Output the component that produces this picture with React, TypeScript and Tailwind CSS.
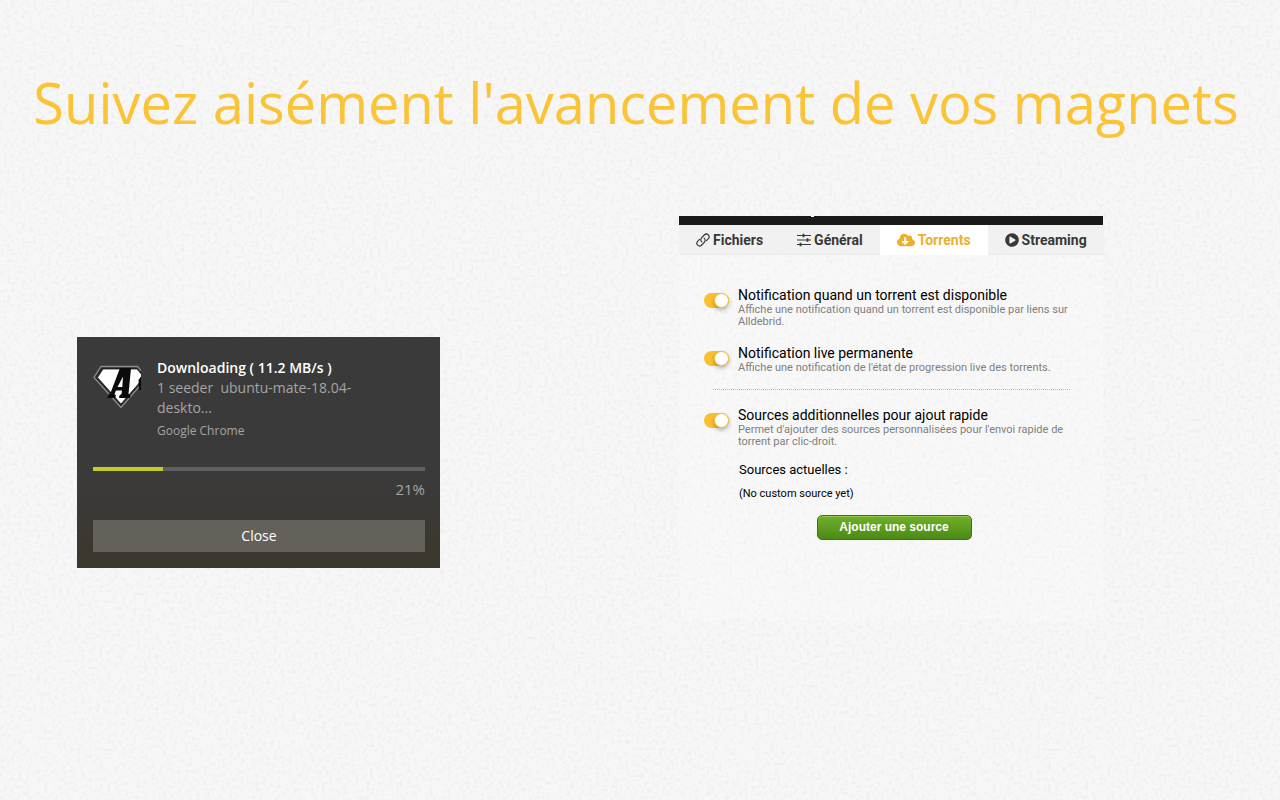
import type { ReactNode } from "react";
import { FaCloudDownloadAlt, FaPlayCircle } from "react-icons/fa";

function PaperTexture() {
  return (
    <svg aria-hidden="true" className="pointer-events-none absolute inset-0 h-full w-full">
      <filter id="paper" x="0" y="0" width="100%" height="100%" colorInterpolationFilters="sRGB">
        <feTurbulence type="fractalNoise" baseFrequency="0.27" numOctaves="2" seed="4" />
        <feColorMatrix values="0 0 0 0 0.6  0 0 0 0 0.6  0 0 0 0 0.6  0.26 0 0 0 -0.12" />
      </filter>
      <rect width="100%" height="100%" filter="url(#paper)" />
    </svg>
  );
}

function Logo() {
  return (
    <svg viewBox="0 0 48 50" className="mt-[3px] h-[50px] w-12 shrink-0" role="img" aria-label="AllDebrid">
      <path d="M8 6.500H44.500L54 17.500L28 47.500L1 17.500Z" fill="#2a2a2a" stroke="#8e8e8e" strokeWidth="1.300" />
      <path d="M10 9H44L51 17.500L28 44L4.500 17.500Z" fill="#fff" stroke="#181818" strokeWidth="0.800" />
      <path d="M27 8H38L35.500 34L37.500 35.500L37 38H26L26.500 35.500L28.500 34L29 30.500H23L21.500 34L23 35.500L22 38H14.500L15 35L17.500 33Z" fill="#0b0b0b" />
      <path d="M30 16.500L24.500 27H29.300Z" fill="#fff" />
      <path d="M45.500 20L48 16.500V30H46Z" fill="#0b0b0b" />
    </svg>
  );
}

function LinkIcon() {
  return (
    <svg viewBox="0 0 14 14" className="size-3.5" fill="none" stroke="currentColor" strokeWidth="1.200" strokeLinecap="round" aria-hidden="true">
      <path d="M5.900 8.900C4.500 7.700 4.500 5.800 5.700 4.600L8.300 2C9.500 0.800 11.300 0.900 12.300 1.900C13.400 3 13.400 4.700 12.200 5.900L10.500 7.600" />
      <path d="M8.100 5.100C9.500 6.300 9.500 8.200 8.300 9.400L5.700 12C4.500 13.200 2.700 13.100 1.700 12.100C0.600 11 0.600 9.300 1.800 8.100L3.500 6.400" />
    </svg>
  );
}

function SlidersIcon() {
  return (
    <svg viewBox="0 0 14 14" className="size-3.5" fill="none" stroke="currentColor" strokeWidth="1.200" aria-hidden="true">
      <path d="M0 2.500H14M0 7H14M0 11.500H14" />
      <path d="M6.500 0.800V4.200M10.500 5.300V8.700M3.500 9.800V13.200" strokeWidth="1.800" />
    </svg>
  );
}

function Tab({ icon, label, active }: { icon: ReactNode; label: string; active?: boolean }) {
  return (
    <button
      type="button"
      role="tab"
      aria-selected={!!active}
      className={
        active
          ? "flex h-[30px] items-center justify-center gap-[3px] bg-white px-[17px] text-[#ebb02d]"
          : "flex h-[30px] items-center justify-center gap-[3px] border-b border-[#e9e9e9] bg-[#f1f1f1] px-[17px] text-[#383838] last:flex-1"
      }
    >
      {icon}
      <span>{label}</span>
    </button>
  );
}

function Setting({ id, title, text }: { id: string; title: string; text: string }) {
  return (
    <div className="flex items-start gap-2">
      <input
        id={id}
        type="checkbox"
        defaultChecked
        className="mt-[6px] flex h-[15px] w-[25px] shrink-0 appearance-none items-center justify-end rounded-full bg-[#ccc] before:size-[15px] before:rounded-full before:border before:border-[#f9c132] before:bg-white before:shadow-[0_2px_4px_rgba(0,0,0,0.3)] checked:bg-[#f9c132]"
      />
      <label htmlFor={id} className="block pl-px text-[11px] leading-3 text-[#808080]">
        <span className="mb-px block text-sm leading-4 text-black">{title}</span>
        {text}
      </label>
    </div>
  );
}

export default function App() {
  return (
    <main className="relative min-h-screen bg-[#f7f7f7]">
      <PaperTexture />
      <div className="relative">
        <h1 className="pt-[66px] pr-2 text-center font-['Open_Sans',sans-serif] text-[56px] leading-[72px] text-[#fbc336]">
          Suivez aisément l'avancement de vos magnets
        </h1>

        <div className="grid grid-cols-2 items-start pt-[78px]">
          <section
            aria-label="Notification"
            className="mt-[121px] ml-[77px] max-w-[363px] bg-linear-to-b from-[#3a3a3a] from-60% to-[#3c372c] pt-5 pr-[15px] pb-4 pl-4 font-['Segoe_UI','Open_Sans',sans-serif] text-[#a5a5a5]"
          >
            <div className="flex gap-4">
              <Logo />
              <div>
                <h2 className="text-sm leading-[21px] font-semibold whitespace-nowrap text-white">Downloading ( 11.2 MB/s )</h2>
                <p className="text-sm leading-5">1 seeder&nbsp; ubuntu-mate-18.04-<br />deskto...</p>
                <p className="pt-[3px] text-xs leading-5">Google Chrome</p>
              </div>
            </div>
            <div className="mt-[26px] h-1 bg-[#606060]" role="progressbar" aria-valuenow={21} aria-valuemin={0} aria-valuemax={100}>
              <div className="h-1 w-[21%] bg-[#c6ca26]" />
            </div>
            <p className="mt-[7px] text-right text-[15px] leading-[22px]">21%</p>
            <button type="button" className="mt-5 block h-8 w-full bg-[#64615a] text-sm text-white">
              Close
            </button>
          </section>

          <section className="ml-[39px] max-w-[424px] font-['Roboto',sans-serif]">
            <div className="h-[9px] bg-[#1a1a1a] pl-[132px]">
              <div className="h-px w-[3px] bg-white" />
            </div>
            <div role="tablist" className="flex text-sm font-bold">
              <Tab icon={<LinkIcon />} label="Fichiers" />
              <Tab icon={<SlidersIcon />} label="Général" />
              <Tab icon={<FaCloudDownloadAlt className="size-[18px]" />} label="Torrents" active />
              <Tab icon={<FaPlayCircle className="size-3.5" />} label="Streaming" />
            </div>
            <div className="bg-white/20 pt-8 pr-[33px] pb-20 pl-[25px]">
              <Setting
                id="available"
                title="Notification quand un torrent est disponible"
                text="Affiche une notification quand un torrent est disponible par liens sur Alldebrid."
              />
              <div className="h-[17px]" />
              <Setting
                id="live"
                title="Notification live permanente"
                text="Affiche une notification de l'état de progression live des torrents."
              />
              <hr className="mt-[15px] mb-[17px] ml-[9px] border-dotted border-[#c4b5a5]" />
              <Setting
                id="sources"
                title="Sources additionnelles pour ajout rapide"
                text="Permet d'ajouter des sources personnalisées pour l'envoi rapide de torrent par clic-droit."
              />
              <div className="pl-[35px] text-black">
                <h3 className="mt-[14px] text-[13px] leading-4">Sources actuelles :</h3>
                <p className="mt-2 text-[11px] leading-4">(No custom source yet)</p>
              </div>
              <div className="mt-[13px] flex justify-center pl-[14px]">
                <button
                  type="button"
                  className="h-[25px] w-[155px] rounded-[5px] border border-[#3f7311] bg-linear-to-b from-[#71b02a] to-[#4b8a15] pb-0.5 font-['Liberation_Sans',sans-serif] text-xs leading-4 font-bold text-white shadow-[inset_0_1px_0_#8fc74e]"
                >
                  Ajouter une source
                </button>
              </div>
            </div>
          </section>
        </div>
      </div>
    </main>
  );
}
